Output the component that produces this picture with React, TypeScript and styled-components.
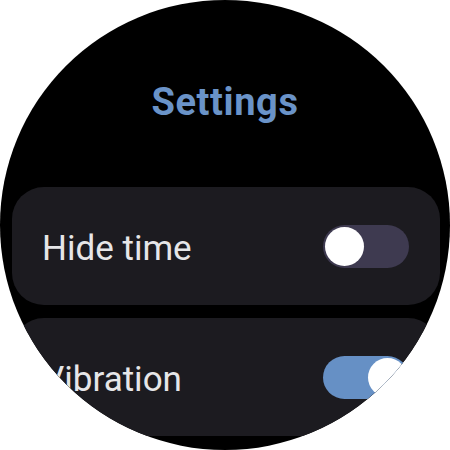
import React from "react";
import styled, { createGlobalStyle } from "styled-components";

const GlobalStyle = createGlobalStyle`
  html, body {
    margin: 0;
    padding: 0;
    background: #ffffff;
  }
  * { box-sizing: border-box; }
`;

const Screen = styled.div`
  width: 450px;
  height: 450px;
  border-radius: 50%;
  overflow: hidden;
  background: #000000;
  display: flex;
  flex-direction: column;
  padding-top: 82px;
  font-family: Roboto, "Liberation Sans", sans-serif;
`;

const Title = styled.h1`
  margin: 0;
  font-size: 38px;
  line-height: 40px;
  font-weight: 700;
  letter-spacing: 0.6px;
  text-align: center;
  color: #6a93c8;
`;

const List = styled.div`
  display: flex;
  flex-direction: column;
  gap: 13px;
  margin: 65px 10px 0 12px;
`;

const Card = styled.div`
  height: 118px;
  flex-shrink: 0;
  border-radius: 32px;
  background: #1c1b20;
  display: flex;
  align-items: center;
  justify-content: space-between;
  padding: 0 31px 0 30px;
`;

const Label = styled.span`
  font-size: 35px;
  line-height: 42px;
  padding-top: 6px;
  color: #e6e6e8;
`;

const Track = styled.div<{ $on: boolean }>`
  width: 86px;
  height: 43px;
  border-radius: 22px;
  padding: 2px;
  display: flex;
  justify-content: ${(p) => (p.$on ? "flex-end" : "flex-start")};
  align-items: center;
  background: ${(p) => (p.$on ? "#6690c5" : "#3e3a50")};
`;

const Thumb = styled.div`
  width: 39px;
  height: 39px;
  border-radius: 50%;
  background: #ffffff;
`;

const Toggle = ({ on }: { on: boolean }) => (
  <Track $on={on}>
    <Thumb />
  </Track>
);

const rows = [
  { label: "Hide time", on: false },
  { label: "Vibration", on: true },
];

export default function App() {
  return (
    <>
      <GlobalStyle />
      <Screen>
        <Title>Settings</Title>
        <List>
          {rows.map((r) => (
            <Card key={r.label}>
              <Label>{r.label}</Label>
              <Toggle on={r.on} />
            </Card>
          ))}
        </List>
      </Screen>
    </>
  );
}
